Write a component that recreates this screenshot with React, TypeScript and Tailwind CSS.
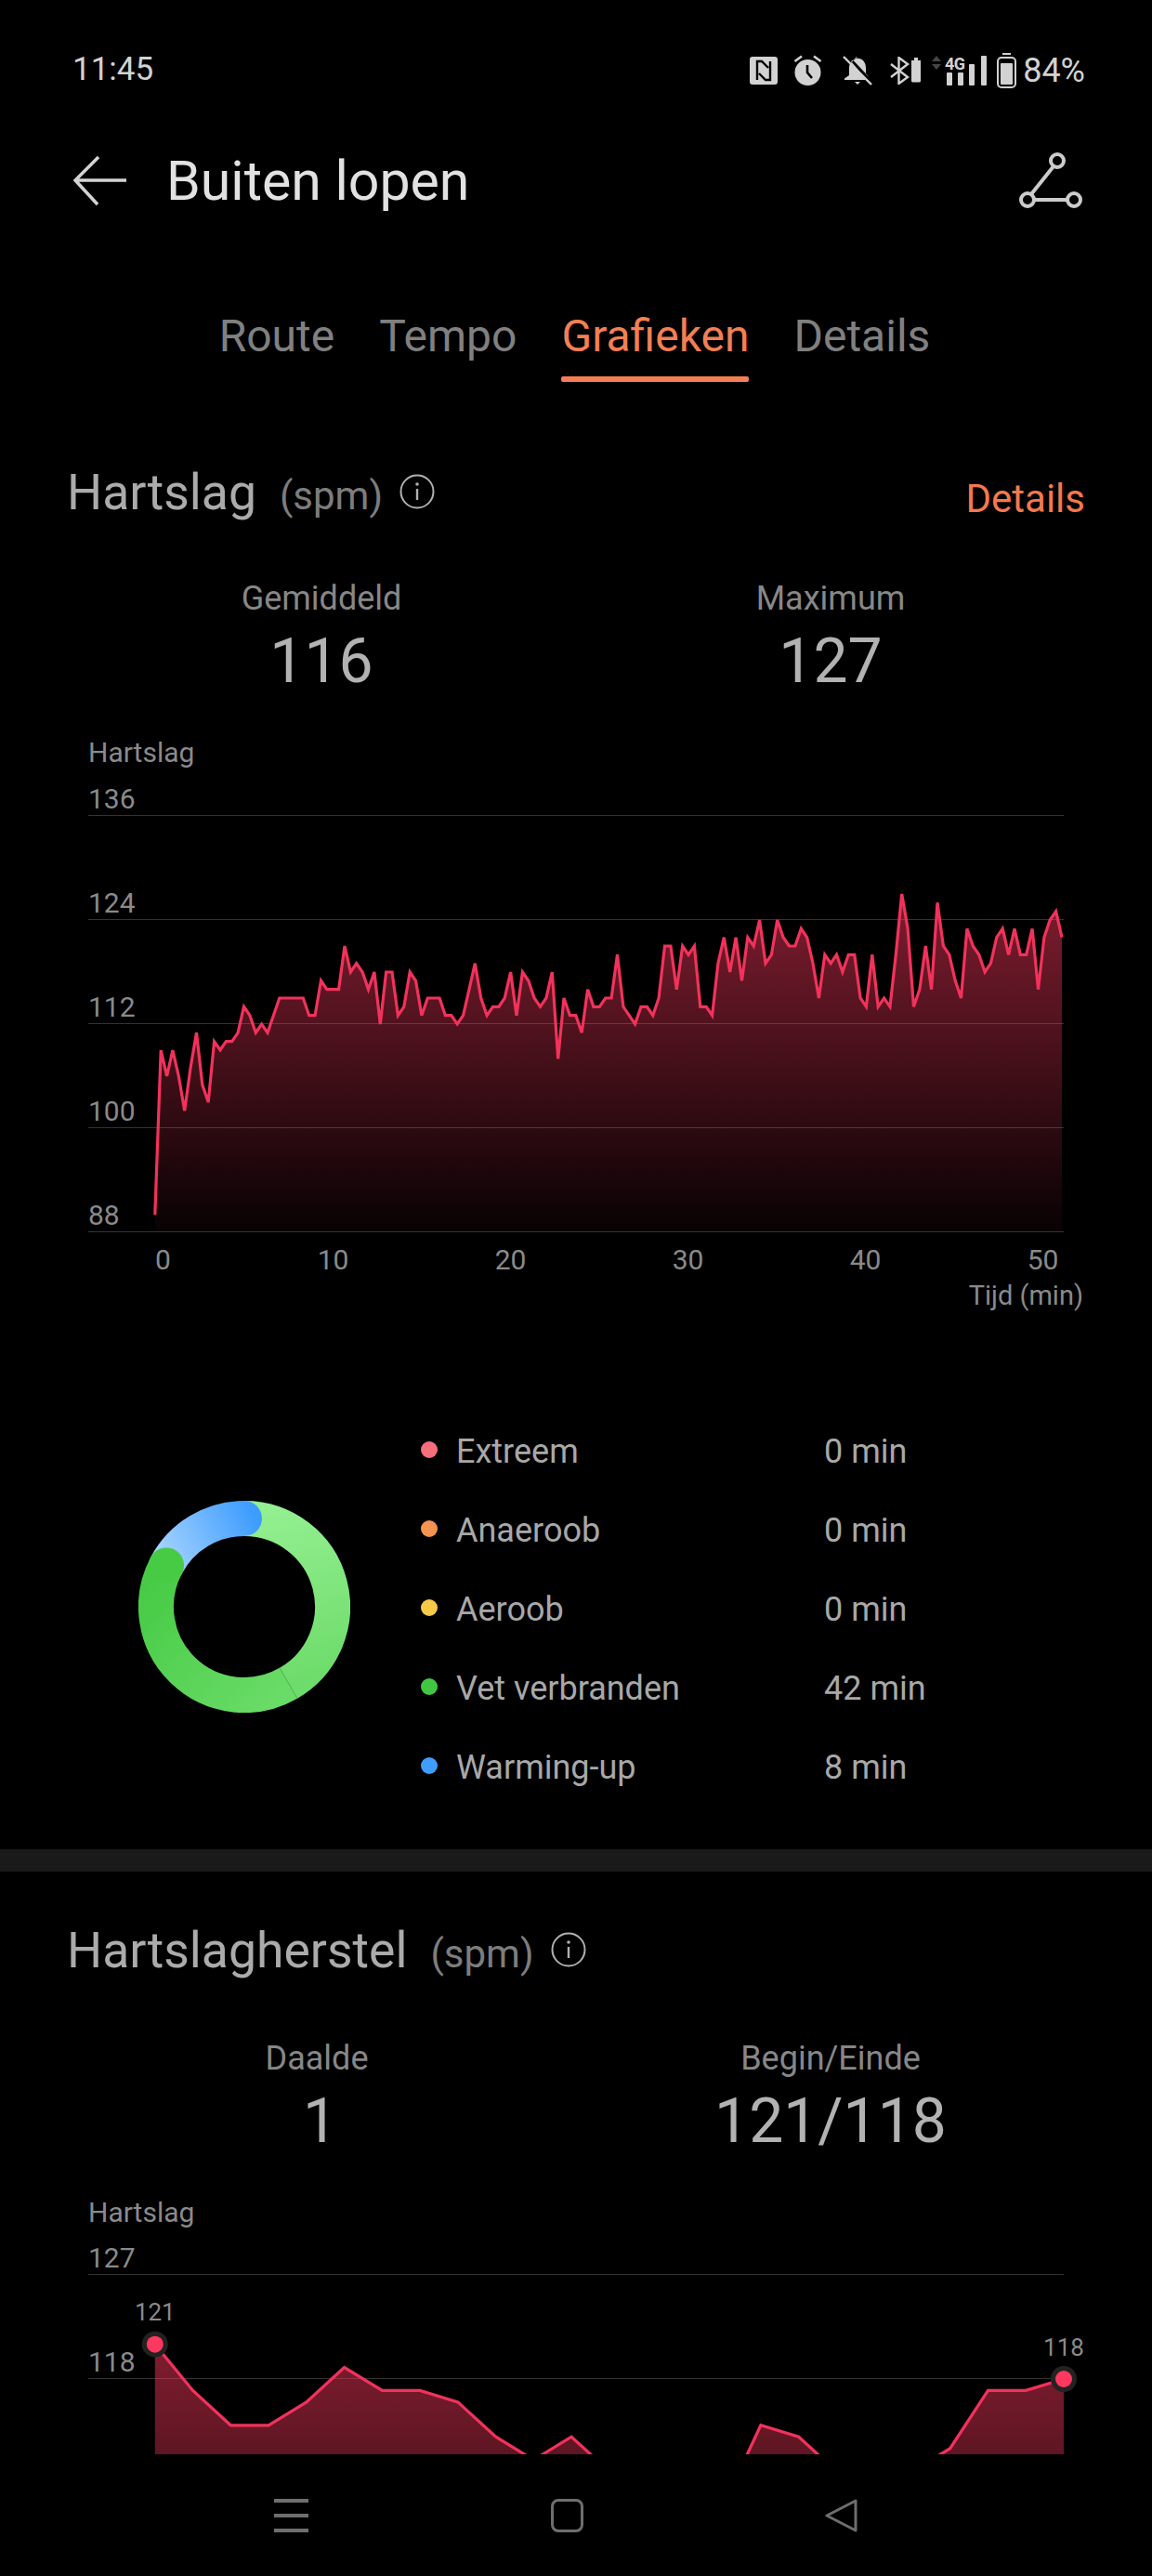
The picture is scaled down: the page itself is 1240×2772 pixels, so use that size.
const heartRate = [
  90, 109, 106, 109, 106, 102, 107, 111, 105, 103, 110, 109, 110, 110, 111, 114, 113, 111, 112, 111,
  113, 115, 115, 115, 115, 115, 113, 113, 117, 116, 116, 116, 121, 118, 119, 118, 116, 118, 112, 118,
  118, 113, 114, 118, 117, 113, 115, 115, 115, 113, 113, 112, 113, 116, 119, 115, 113, 114, 114, 115,
  118, 113, 118, 117, 115, 114, 115, 118, 108, 115, 113, 113, 111, 116, 114, 114, 115, 115, 120, 114,
  113, 112, 114, 114, 113, 115, 121, 121, 116, 121, 120, 121, 114, 114, 113, 119, 122, 118, 122, 117,
  122, 121, 124, 119, 120, 124, 122, 121, 121, 123, 122, 119, 115, 120, 119, 120, 118, 120, 120, 115,
  114, 120, 114, 115, 114, 120, 127, 123, 114, 116, 121, 116, 126, 121, 120, 117, 115, 123, 121, 120,
  118, 119, 122, 123, 120, 123, 120, 120, 123, 116, 122, 124, 125, 122,
];

const recovery = [
  121, 117, 114, 114, 116, 119, 117, 117, 116, 113, 111, 113, 110, 107, 107, 107, 114, 113, 110, 107, 110, 112, 117,
  117, 118,
];

const zones = [
  { name: "Extreem", time: "0 min", dot: "bg-[#f76f7b]" },
  { name: "Anaeroob", time: "0 min", dot: "bg-[#f59350]" },
  { name: "Aeroob", time: "0 min", dot: "bg-[#f7c948]" },
  { name: "Vet verbranden", time: "42 min", dot: "bg-[#42c742]" },
  { name: "Warming-up", time: "8 min", dot: "bg-[#3f9dff]" },
];

function StatusIcons() {
  return (
    <div className="flex items-center text-[#d2d2d2]">
      <svg width="30" height="30" viewBox="0 0 30 30">
        <rect width="30" height="30" rx="3" fill="currentColor" />
        <path d="M8 25V5h5l7 7M22 5v20h-5l-7-7" fill="none" stroke="#000" strokeWidth="2.4" />
      </svg>
      <svg className="ml-[17px]" width="31" height="33" viewBox="0 0 31 33">
        <circle cx="15.5" cy="19" r="14" fill="currentColor" />
        <path d="M15 11v8l5 6" fill="none" stroke="#000" strokeWidth="2.6" />
        <path d="M9 1.500 1.500 7M22 1.500 29.500 7" fill="none" stroke="currentColor" strokeWidth="2.6" />
      </svg>
      <svg className="ml-[22px]" width="32" height="32" viewBox="0 0 32 32">
        <path
          d="M16 1c-1.500 0-2.500 1-2.800 2.500L9 6 23 22.500l1.500 3.500H2v-1.500L7 21v-8c0-1.500.2-2.800.7-4zM11 4.500C17 0 25 4 25 13v7l4 3.500z"
          fill="currentColor"
        />
        <path d="M13 28h6l-3 3z" fill="currentColor" />
        <path d="M1 1 31 31" stroke="currentColor" strokeWidth="2.400" />
      </svg>
      <svg className="ml-[19px]" width="33" height="30" viewBox="0 0 33 30">
        <path d="M1 8 19 22 9.500 29V1L19 8 1 22" fill="none" stroke="currentColor" strokeWidth="2.400" />
        <path d="M23 4h3V1h4v3h3v22a1.500 1.500 0 0 1-1.500 1.500h-7A1.500 1.500 0 0 1 23 26z" fill="currentColor" />
      </svg>
      <svg className="ml-[12px] overflow-visible" width="59" height="32" viewBox="0 0 59 32">
        <path d="m5 0 5 6H0zM5 15l5-6H0z" fill="#444" />
        <text x="14" y="15" fontSize="18" fontWeight="700" fill="currentColor" textLength="22">
          4G
        </text>
        <rect x="16" y="18" width="6" height="14" rx="1" fill="currentColor" />
        <rect x="28" y="18" width="6" height="14" rx="1" fill="currentColor" />
        <rect x="40" y="9" width="6" height="23" rx="1" fill="currentColor" />
        <rect x="53" y="0" width="6" height="32" rx="1" fill="currentColor" />
      </svg>
      <svg className="ml-[11px]" width="21" height="38" viewBox="0 0 21 38">
        <rect x="6" y="0" width="9" height="2" fill="currentColor" />
        <rect x="1" y="5" width="19" height="32" rx="4" fill="none" stroke="currentColor" strokeWidth="2" />
        <rect x="4" y="11" width="13" height="23" rx="1" fill="currentColor" />
      </svg>
      <span className="ml-[7px] text-[36px] leading-[40px]">84%</span>
    </div>
  );
}

function InfoIcon() {
  return (
    <svg width="38" height="38" viewBox="0 0 38 38" className="text-[#b0b0b0]">
      <circle cx="19" cy="19" r="17.500" fill="none" stroke="currentColor" strokeWidth="2" />
      <circle cx="19" cy="11" r="1.800" fill="currentColor" />
      <path d="M19 16v12" stroke="currentColor" strokeWidth="2.400" />
    </svg>
  );
}

function SectionHead({ title, detail }: { title: string; detail?: string }) {
  return (
    <div className="flex h-[64px] items-baseline px-[72px] leading-[64px]">
      <h2 className="text-[53.5px] text-[#ababab]">{title}</h2>
      <span className="ml-[25px] mr-[18px] text-[42px] text-[#7d7d7d]">(spm)</span>
      <InfoIcon />
      {detail && <span className="ml-auto translate-y-[3px] text-[42px] text-[#f4794d]">{detail}</span>}
    </div>
  );
}

type Stat = { label: string; value: string; labelClass?: string; valueClass?: string };

function Stats({ items }: { items: Stat[] }) {
  return (
    <div className="grid grid-cols-2 px-[72px] text-center">
      {items.map((s) => (
        <div key={s.label}>
          <p className={`text-[36px] leading-[44px] text-[#878787] ${s.labelClass ?? ""}`}>{s.label}</p>
          <p className={`mt-[6px] text-[66px] leading-[80px] text-[#b2b2b2] ${s.valueClass ?? ""}`}>{s.value}</p>
        </div>
      ))}
    </div>
  );
}

type Marker = { index: number; label: string; labelDy: number };

function Chart(props: {
  id: string;
  labels: string[];
  topBpm: number;
  values: number[];
  lastX: number;
  pxPerBpm: number;
  fillTo: number;
  markers?: Marker[];
}) {
  const { id, labels, topBpm, values, lastX, pxPerBpm, fillTo, markers = [] } = props;
  const startX = 71.8;
  const step = (lastX - startX) / (values.length - 1);
  const xAt = (i: number) => startX + i * step;
  const yAt = (bpm: number) => 40 + (topBpm - bpm) * pxPerBpm;
  const line = values.map((v, i) => `${xAt(i).toFixed(1)},${yAt(v).toFixed(1)}`).join(" ");
  const area = `${startX},${fillTo} ${line} ${lastX},${fillTo}`;

  return (
    <div className="relative ml-[95px] w-[1050px]">
      {labels.map((l, i) => (
        <div
          key={l}
          className={`flex items-end border-b border-[#333333] pb-[2px] text-[30px] leading-[30px] text-[#8a8a8a] ${
            i === 0 ? "h-[40px]" : "h-[112px]"
          }`}
        >
          {l}
        </div>
      ))}
      <svg className="absolute left-0 top-0 overflow-visible" width="1050" height={fillTo}>
        <defs>
          <linearGradient
            id={id}
            x1="0"
            y1={yAt(Math.max(...values))}
            x2="0"
            y2={fillTo}
            gradientUnits="userSpaceOnUse"
          >
            <stop offset="0" stopColor="#ff3a5f" stopOpacity="0.5" />
            <stop offset="1" stopColor="#ff3a5f" stopOpacity="0.03" />
          </linearGradient>
        </defs>
        <polygon points={area} fill={`url(#${id})`} />
        <polyline points={line} fill="none" stroke="#f2325b" strokeWidth="3.2" strokeLinejoin="miter" />
        {markers.map((m) => (
          <g key={m.index}>
            <circle cx={xAt(m.index)} cy={yAt(values[m.index])} r="14" fill="#222222" />
            <circle cx={xAt(m.index)} cy={yAt(values[m.index])} r="9" fill="#ff3860" />
            <text
              x={xAt(m.index)}
              y={yAt(values[m.index]) + m.labelDy}
              textAnchor="middle"
              fontSize="26"
              fill="#8a8a8a"
            >
              {m.label}
            </text>
          </g>
        ))}
      </svg>
    </div>
  );
}

function Donut() {
  return (
    <svg width="228" height="228" viewBox="0 0 228 228" className="mb-[6px] shrink-0">
      <defs>
        <linearGradient id="lightArc" x1="114" y1="19" x2="161" y2="196" gradientUnits="userSpaceOnUse">
          <stop offset="0" stopColor="#93ef90" />
          <stop offset="1" stopColor="#6edc6b" />
        </linearGradient>
        <linearGradient id="darkArc" x1="161" y1="196" x2="30" y2="69" gradientUnits="userSpaceOnUse">
          <stop offset="0" stopColor="#69db67" />
          <stop offset="1" stopColor="#47cb45" />
        </linearGradient>
        <linearGradient id="blueArc" x1="30" y1="69" x2="125" y2="19" gradientUnits="userSpaceOnUse">
          <stop offset="0" stopColor="#a4d2ff" />
          <stop offset="1" stopColor="#3f9dff" />
        </linearGradient>
      </defs>
      <g fill="none" strokeWidth="38">
        <path d="M114 19A95 95 0 0 1 161.500 196.300" stroke="url(#lightArc)" />
        <path d="M30.100 69.400A95 95 0 0 1 114 19" stroke="url(#blueArc)" strokeLinecap="round" />
        <path d="M161.500 196.300A95 95 0 0 1 30.100 69.400" stroke="url(#darkArc)" />
        <circle cx="30.100" cy="69.400" r="19" fill="#47cb45" stroke="none" />
      </g>
      <path d="M152 179.800 171 212.700" stroke="#55b855" strokeWidth="1" />
    </svg>
  );
}

export default function App() {
  return (
    <div className="flex h-[2772px] w-[1240px] flex-col overflow-hidden bg-black [font-family:Roboto,sans-serif]">
      <div className="flex min-h-0 flex-1 flex-col overflow-hidden">
        <div className="flex h-[148px] shrink-0 items-center justify-between pl-[78px] pr-[72px] pt-[3px] text-[#d2d2d2]">
          <span className="text-[35px]">11:45</span>
          <StatusIcons />
        </div>

        <div className="flex h-[94px] shrink-0 items-center pl-[78px] pr-[75px]">
          <svg width="60" height="54" viewBox="0 0 60 54" className="shrink-0">
            <path d="M58 26H4M28 1 3 26l24 26" fill="none" stroke="#d4d4d4" strokeWidth="3.500" />
          </svg>
          <h1 className="ml-[41px] text-[59px] leading-[70px] text-[#e2e2e2]">Buiten lopen</h1>
          <svg width="68" height="62" viewBox="0 0 68 62" className="ml-auto shrink-0">
            <g fill="none" stroke="#cccccc" strokeWidth="4">
              <circle cx="41" cy="9" r="7" />
              <circle cx="9" cy="51" r="7" />
              <circle cx="59" cy="51" r="7" />
              <path d="M37 15 13 45M16 51h36" />
            </g>
          </svg>
        </div>

        <div className="mt-[78px] flex h-[91px] shrink-0 justify-center gap-[48px] pr-[3px] pt-[14px] text-[48px] leading-[56px] text-[#808080]">
          <span>Route</span>
          <span>Tempo</span>
          <span className="flex flex-col items-center text-[#f47f53]">
            Grafieken
            <span className="mt-[15px] h-[6px] w-full rounded-[2px] bg-[#f47f53]" />
          </span>
          <span>Details</span>
        </div>

        <div className="mt-[87px]">
          <SectionHead title="Hartslag" detail="Details" />
        </div>
        <div className="mt-[60px]">
          <Stats
            items={[
              { label: "Gemiddeld", value: "116" },
              { label: "Maximum", value: "127" },
            ]}
          />
        </div>
        <p className="ml-[95px] mt-[40px] text-[30px] leading-[36px] text-[#8a8a8a]">Hartslag</p>
        <div className="mt-[10px]">
          <Chart
            id="hrFill"
            labels={["136", "124", "112", "100", "88"]}
            topBpm={136}
            values={heartRate}
            lastX={1048}
            pxPerBpm={9.333}
            fillTo={488}
          />
        </div>
        <div className="ml-[167px] mt-[12px] flex text-[30px] leading-[36px] text-[#8a8a8a]">
          <span className="w-[96px]">0</span>
          {["10", "20", "30", "40", "50"].map((t) => (
            <span key={t} className="w-[191px] text-center">
              {t}
            </span>
          ))}
        </div>
        <p className="mr-[74px] mt-[2px] text-right text-[29px] leading-[36px] text-[#8a8a8a]">Tijd (min)</p>

        <div className="ml-[149px] mt-[107px] flex items-center">
          <Donut />
          <ul className="ml-[76px]">
            {zones.map((z) => (
              <li key={z.name} className="flex h-[85px] items-center text-[36px] text-[#a8a8a8]">
                <span className={`h-[18px] w-[18px] -translate-y-[2px] rounded-full ${z.dot}`} />
                <span className="ml-[20px] w-[396px]">{z.name}</span>
                <span>{z.time}</span>
              </li>
            ))}
          </ul>
        </div>

        <div className="mt-[46px] h-[24px] shrink-0 bg-[#1a1a1a]" />

        <div className="mt-[53px]">
          <SectionHead title="Hartslagherstel" />
        </div>
        <div className="mt-[62px]">
          <Stats
            items={[
              { label: "Daalde", value: "1", labelClass: "pr-[10px]", valueClass: "pr-[3px]" },
              { label: "Begin/Einde", value: "121/118" },
            ]}
          />
        </div>
        <p className="ml-[95px] mt-[40px] text-[30px] leading-[36px] text-[#8a8a8a]">Hartslag</p>
        <div className="mt-[9px]">
          <Chart
            id="recoveryFill"
            labels={["127", "118"]}
            topBpm={127}
            values={recovery}
            lastX={1050}
            pxPerBpm={12.444}
            fillTo={546}
            markers={[
              { index: 0, label: "121", labelDy: -26 },
              { index: 24, label: "118", labelDy: -25 },
            ]}
          />
        </div>
      </div>

      <nav className="flex h-[131px] shrink-0 items-start bg-black pt-[48px]">
        <div className="ml-[295px] flex h-[36px] w-[37px] flex-col justify-between">
          <span className="h-[4px] bg-[#6e6e6e]" />
          <span className="h-[4px] bg-[#6e6e6e]" />
          <span className="h-[4px] bg-[#6e6e6e]" />
        </div>
        <span className="ml-[261px] h-[36px] w-[35px] rounded-[8px] border-[3px] border-[#6e6e6e]" />
        <svg width="36" height="36" viewBox="0 0 36 36" className="ml-[260px]">
          <path d="M33 2v32L2 18z" fill="none" stroke="#6e6e6e" strokeWidth="3" strokeLinejoin="round" />
        </svg>
      </nav>
    </div>
  );
}
